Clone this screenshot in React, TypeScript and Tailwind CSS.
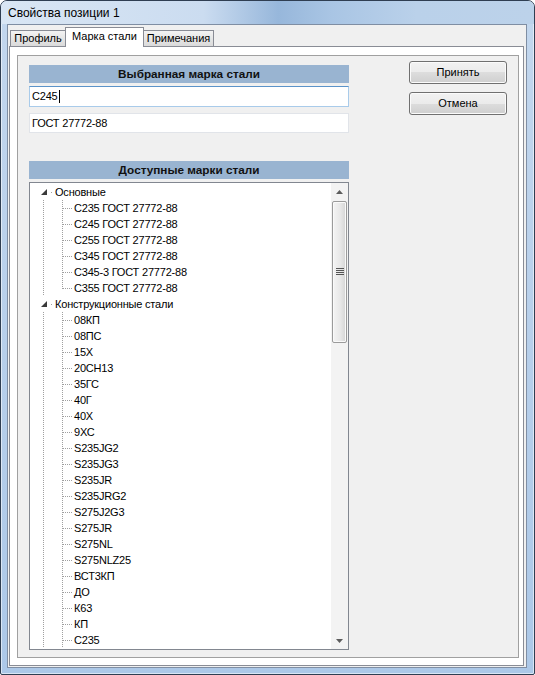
const groups = [
  {
    name: 'Основные',
    items: [
      'С235 ГОСТ 27772-88',
      'С245 ГОСТ 27772-88',
      'С255 ГОСТ 27772-88',
      'С345 ГОСТ 27772-88',
      'С345-3 ГОСТ 27772-88',
      'С355 ГОСТ 27772-88',
    ],
  },
  {
    name: 'Конструкционные стали',
    items: [
      '08КП', '08ПС', '15Х', '20СН13', '35ГС', '40Г', '40Х', '9ХС', 'S235JG2', 'S235JG3', 'S235JR',
      'S235JRG2', 'S275J2G3', 'S275JR', 'S275NL', 'S275NLZ25', 'ВСТ3КП', 'ДО', 'К63', 'КП', 'С235',
    ],
  },
]

function GroupRow({ label }: { label: string }) {
  return (
    <div className="flex h-[16px] items-center">
      <svg width="25" height="16" className="shrink-0">
        <polygon points="17,5 17,11 11,11" fill="#3a3a3a" />
        <rect x="21" y="8" width="1" height="1" fill="#a0a0a0" />
      </svg>
      <span className="whitespace-nowrap leading-none">{label}</span>
    </div>
  )
}

function ItemRow({ label, last }: { label: string; last: boolean }) {
  return (
    <div className="flex h-[16px] items-center">
      <svg width="44" height="16" className="shrink-0">
        <line x1="13.5" y1="0" x2="13.5" y2="16" stroke="#a0a0a0" strokeDasharray="1 1" />
        <line x1="32.5" y1="0" x2="32.5" y2={last ? 9 : 16} stroke="#a0a0a0" strokeDasharray="1 1" />
        <line x1="33" y1="8.5" x2="43" y2="8.5" stroke="#a0a0a0" strokeDasharray="1 1" />
      </svg>
      <span className="whitespace-nowrap leading-none">{label}</span>
    </div>
  )
}

function Header({ children }: { children: string }) {
  return (
    <div className="flex h-[18px] items-center justify-center bg-[#99b4d1] text-[11.75px] font-bold text-[#111]">
      {children}
    </div>
  )
}

function Button({ children }: { children: string }) {
  return (
    <div className="flex h-[23px] w-[98px] items-center justify-center rounded-[3px] border border-[#707070] bg-[linear-gradient(180deg,#f2f2f2_0%,#ebebeb_50%,#dddddd_50%,#cfcfcf_100%)] shadow-[inset_0_0_0_1px_#fbfbfb]">
      {children}
    </div>
  )
}

function ScrollBar() {
  return (
    <div className="flex w-[17px] shrink-0 flex-col bg-[#f3f3f3]">
      <div className="flex h-[17px] items-center justify-center">
        <svg width="7" height="4">
          <polygon points="0,4 7,4 3.5,0" fill="#5c5c5c" />
        </svg>
      </div>
      <div className="mx-[1px] mt-[1px] flex h-[142px] items-center justify-center rounded-[2px] border border-[#9b9b9b] bg-[linear-gradient(90deg,#f4f4f4_0%,#e8e8e8_55%,#d5d5d5_100%)] shadow-[inset_0_0_0_1px_#fafafa]">
        <svg width="8" height="8">
          <line x1="0" y1="0.5" x2="8" y2="0.5" stroke="#555" />
          <line x1="0" y1="2.5" x2="8" y2="2.5" stroke="#555" />
          <line x1="0" y1="4.5" x2="8" y2="4.5" stroke="#555" />
          <line x1="0" y1="6.5" x2="8" y2="6.5" stroke="#555" />
        </svg>
      </div>
      <div className="flex-1" />
      <div className="flex h-[17px] items-center justify-center">
        <svg width="7" height="4">
          <polygon points="0,0 7,0 3.5,4" fill="#5c5c5c" />
        </svg>
      </div>
    </div>
  )
}

export default function App() {
  return (
    <div className="h-[675px] w-[535px] font-['Liberation_Sans',Arial,sans-serif] text-[11px] text-black">
      <div className="flex h-full flex-col rounded-t-[7px] rounded-b-[2px] border border-[#2f3e52] bg-[linear-gradient(180deg,#c3d7ee_0%,#acc8e8_100%)] shadow-[inset_0_0_0_1px_rgba(255,255,255,0.55)]">
        {/* title bar */}
        <div className="flex h-[23px] items-center rounded-t-[6px] bg-[linear-gradient(90deg,#d9e6f4_0%,#cbdcf0_38%,#97b7db_52%,#a9c5e4_62%,#bad1ea_78%,#bcd2ea_100%)] pl-[7px] text-[12px]">
          Свойства позиции 1
        </div>

        <div className="flex">
          <div className="w-[6px]" />
          {/* client area */}
          <div className="h-[644px] w-[520px] border border-[#7f8ea3] bg-[#f0f0f0]">
            {/* tabs */}
            <div className="flex h-[21px] items-end pl-[2px]">
              <div className="flex h-[16px] w-[55px] items-center justify-center border-l border-t border-[#898c95] bg-[linear-gradient(180deg,#f3f3f3_0%,#e6e6e6_50%,#dadada_100%)]">
                Профиль
              </div>
              <div className="relative z-10 -mb-[1px] flex h-[20px] w-[79px] items-center justify-center border-l border-r border-t border-[#898c95] bg-white pb-[2px]">
                Марка стали
              </div>
              <div className="flex h-[16px] w-[70px] items-center justify-center border-r border-t border-[#898c95] bg-[linear-gradient(180deg,#f3f3f3_0%,#e6e6e6_50%,#dadada_100%)]">
                Примечания
              </div>
            </div>

            {/* tab page */}
            <div className="ml-[1px] h-[620px] w-[515px] border border-[#898c95] bg-white">
              <div className="ml-[7px] mt-[8px] flex h-[603px] w-[502px] items-start border border-[#a0a0a0] bg-[#f0f0f0]">
                <div className="ml-[11px] mt-[9px] flex w-[320px] flex-col">
                  <Header>Выбранная марка стали</Header>
                  <div className="mt-[3px] flex h-[21px] items-center border border-[#a9cbea] border-t-[#5b93c9] bg-white pl-[2px] tracking-[-0.2px]">
                    <span>С245</span>
                    <span className="ml-[1px] h-[13px] w-[1px] bg-black" />
                  </div>
                  <div className="mt-[6px] flex h-[20px] items-center border border-[#e1e4e9] bg-white pl-[2px] tracking-[-0.2px]">
                    ГОСТ 27772-88
                  </div>
                  <div className="mt-[28px]">
                    <Header>Доступные марки стали</Header>
                  </div>
                  <div className="mt-[3px] flex h-[468px] border border-[#828790] bg-white">
                    <div className="flex-1 overflow-hidden pt-[1px] tracking-[-0.2px]">
                      {groups.map((g) => (
                        <div key={g.name}>
                          <GroupRow label={g.name} />
                          {g.items.map((it, i) => (
                            <ItemRow key={it} label={it} last={g.name === 'Основные' && i === g.items.length - 1} />
                          ))}
                        </div>
                      ))}
                    </div>
                    <ScrollBar />
                  </div>
                </div>

                <div className="ml-[60px] mt-[5px] flex flex-col gap-[8px]">
                  <Button>Принять</Button>
                  <Button>Отмена</Button>
                </div>
              </div>
            </div>
          </div>
          <div className="w-[7px]" />
        </div>
      </div>
    </div>
  )
}
